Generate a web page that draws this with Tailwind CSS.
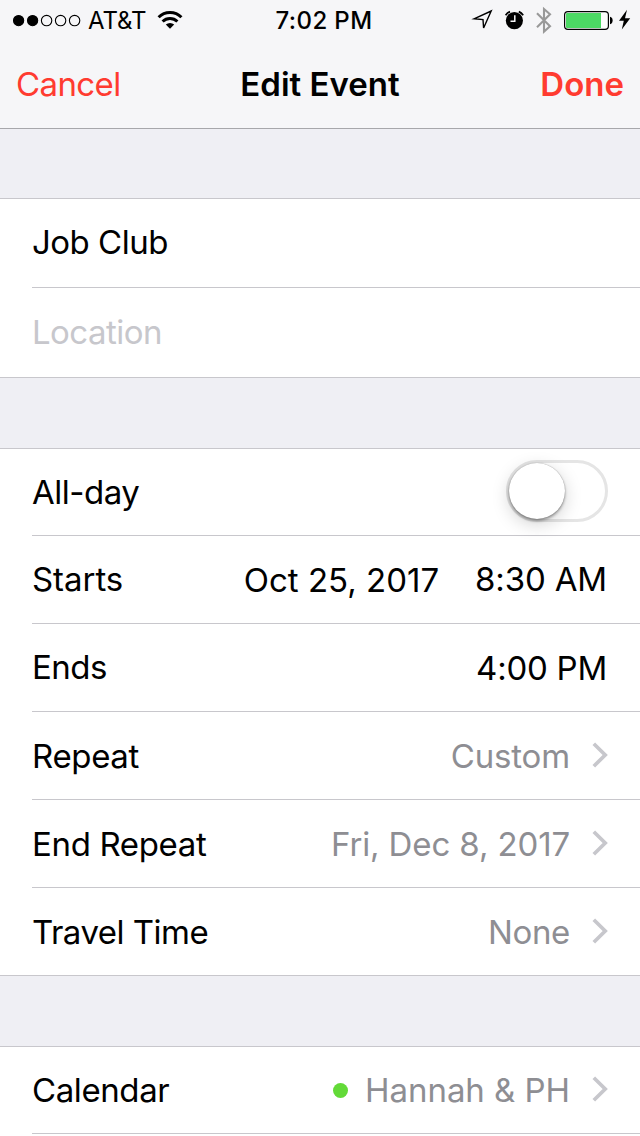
<!DOCTYPE html>
<html lang="en">
<head>
<meta charset="utf-8">
<title>Edit Event</title>
<script src="https://cdn.jsdelivr.net/npm/@tailwindcss/browser@4"></script>
</head>
<body class="w-[640px] h-[1136px] overflow-hidden bg-[#efeff4] font-[Inter,sans-serif] text-[33px] text-black flex flex-col">
<svg class="hidden"><symbol id="chevron" viewBox="0 0 16 26"><path d="M1.8 1.8 13.2 13 1.8 24.2" fill="none" stroke="#c7c7cc" stroke-width="3.7"/></symbol></svg>

<header class="h-[129px] shrink-0 bg-[#f6f6f8] border-b border-[#a7a7ab]">
  <div class="h-10 grid grid-cols-[1fr_auto_1fr] text-2xl leading-[42px]">
    <div class="flex pl-3">
      <svg class="w-[72px] h-10 mr-1" viewBox="0 0 72 40" fill="none" stroke="#000" stroke-width="1.1">
        <circle cx="6.6" cy="20.6" r="5.1" fill="#000"/><circle cx="20.6" cy="20.6" r="5.1" fill="#000"/>
        <circle cx="34.6" cy="20.6" r="5.2"/><circle cx="48.6" cy="20.6" r="5.2"/><circle cx="62.6" cy="20.6" r="5.2"/>
      </svg>
      <span class="tracking-[-0.1px]">AT&amp;T</span>
      <svg class="w-[26px] h-10 ml-[11px]" viewBox="0 0 26 40" fill="none" stroke="#000" stroke-width="3">
        <path d="M1.6 17.3a16 16 0 0 1 22.8 0"/>
        <path d="M5.6 21.5a10.6 10.6 0 0 1 14.8 0"/>
        <path d="M13 28.8 8.8 24.6a6.2 6.2 0 0 1 8.4 0z" fill="#000" stroke="none"/>
      </svg>
    </div>
    <div class="font-medium tracking-[0.4px] pl-2">7:02 PM</div>
    <svg class="w-[180px] h-10 justify-self-end" viewBox="460 0 180 40">
      <path d="M474 18.8 491.2 11 483.6 28 483 19.6z" fill="none" stroke="#000" stroke-width="1.4"/>
      <circle cx="514.4" cy="20.6" r="8.6"/>
      <path d="M505.6 15.2a10.8 10.8 0 0 1 4.4-3.6M523.2 15.2a10.8 10.8 0 0 0-4.4-3.6" fill="none" stroke="#000" stroke-width="1.7"/>
      <path d="M514.8 15.3v5.9h-4.3" fill="none" stroke="#f6f6f8" stroke-width="1.5"/>
      <path d="M537 13.2 550 26.3 544 31.6V9L550 14.2 537 27.2" fill="none" stroke="#999" stroke-width="2.1"/>
      <rect x="564.6" y="11.6" width="43.8" height="17.8" rx="3.4" fill="#fdfdfd" stroke="#000" stroke-width="1.2"/>
      <path d="M567 13h34v15h-34q-1 0-1-1v-13q0-1 1-1z" fill="#4cd964"/>
      <path d="M610 16.8a3.4 3.8 0 0 1 0 7.4z"/>
      <path d="M627 9.8 619 20.7h4.8l-2 8.9 8.4-11.3h-5.2z"/>
    </svg>
  </div>
  <div class="h-22 px-4 grid grid-cols-[1fr_auto_1fr] leading-[88px]">
    <span class="text-[#ff3b30] tracking-[-0.6px]">Cancel</span>
    <h1 class="font-semibold">Edit Event</h1>
    <span class="text-[#ff3b30] font-semibold text-right">Done</span>
  </div>
</header>

<main class="flex flex-col">
  <section class="mt-[69px] bg-white border-y border-[#c8c7cc] pl-8">
    <div class="h-[89px] border-b border-[#c8c7cc] leading-[86px] tracking-[-0.5px]">Job Club</div>
    <div class="h-[89px] leading-[88px] text-[#c7c7cc] tracking-[-0.54px]">Location</div>
  </section>

  <section class="mt-[70px] bg-white border-y border-[#c8c7cc] pl-8 tracking-[-0.35px]">
    <div class="h-[87px] border-b border-[#c8c7cc] pr-8 flex justify-between leading-[86px]">
      <span class="tracking-[-0.5px]">All-day</span>
      <span class="mt-[11px] w-[102px] h-[62px] rounded-full border-3 border-[#e5e5e5]">
        <span class="block size-14 rounded-full bg-white shadow-[0_0_1px_rgba(0,0,0,0.4),0_2px_3px_rgba(0,0,0,0.35),0_5px_18px_rgba(0,0,0,0.18)]"></span>
      </span>
    </div>
    <div class="h-[88px] border-b border-[#c8c7cc] pr-[33px] flex leading-[86px]">
      <span class="tracking-[-0.05px]">Starts</span>
      <span class="ml-auto leading-[88px] tracking-normal">Oct 25, 2017</span>
      <span class="ml-[36px] tracking-[-0.15px]">8:30 AM</span>
    </div>
    <div class="h-[88px] border-b border-[#c8c7cc] pr-[33px] flex justify-between leading-[86px]">
      <span class="tracking-[-0.5px]">Ends</span>
      <span class="leading-[88px] tracking-[-0.25px]">4:00 PM</span>
    </div>
    <div class="h-[88px] border-b border-[#c8c7cc] pr-8 flex leading-[88px]">
      <span>Repeat</span>
      <span class="ml-auto text-[#8e8e93] tracking-[-0.15px]">Custom</span>
      <svg class="w-4 h-[26px] ml-[22px] mt-[30px]"><use href="#chevron"/></svg>
    </div>
    <div class="h-[88px] border-b border-[#c8c7cc] pr-8 flex leading-[88px]">
      <span>End Repeat</span>
      <span class="ml-auto text-[#8e8e93] tracking-[-0.12px]">Fri, Dec 8, 2017</span>
      <svg class="w-4 h-[26px] ml-[22px] mt-[30px]"><use href="#chevron"/></svg>
    </div>
    <div class="h-[87px] pr-8 flex leading-[88px]">
      <span class="tracking-[-0.5px]">Travel Time</span>
      <span class="ml-auto text-[#8e8e93] tracking-[-0.35px]">None</span>
      <svg class="w-4 h-[26px] ml-[22px] mt-[30px]"><use href="#chevron"/></svg>
    </div>
  </section>

  <section class="mt-[70px] h-[90px] bg-white border-t border-[#c8c7cc] pl-8">
    <div class="h-[87px] border-b border-[#c8c7cc] pr-8 flex leading-[86px]">
      <span class="tracking-[-0.4px]">Calendar</span>
      <span class="ml-auto mt-9 mr-[17px] size-[15px] rounded-full bg-[#63da38]"></span>
      <span class="text-[#8e8e93] tracking-[-0.05px]">Hannah &amp; PH</span>
      <svg class="w-4 h-[26px] ml-[22px] mt-[29px]"><use href="#chevron"/></svg>
    </div>
  </section>
</main>
</body>
</html>
